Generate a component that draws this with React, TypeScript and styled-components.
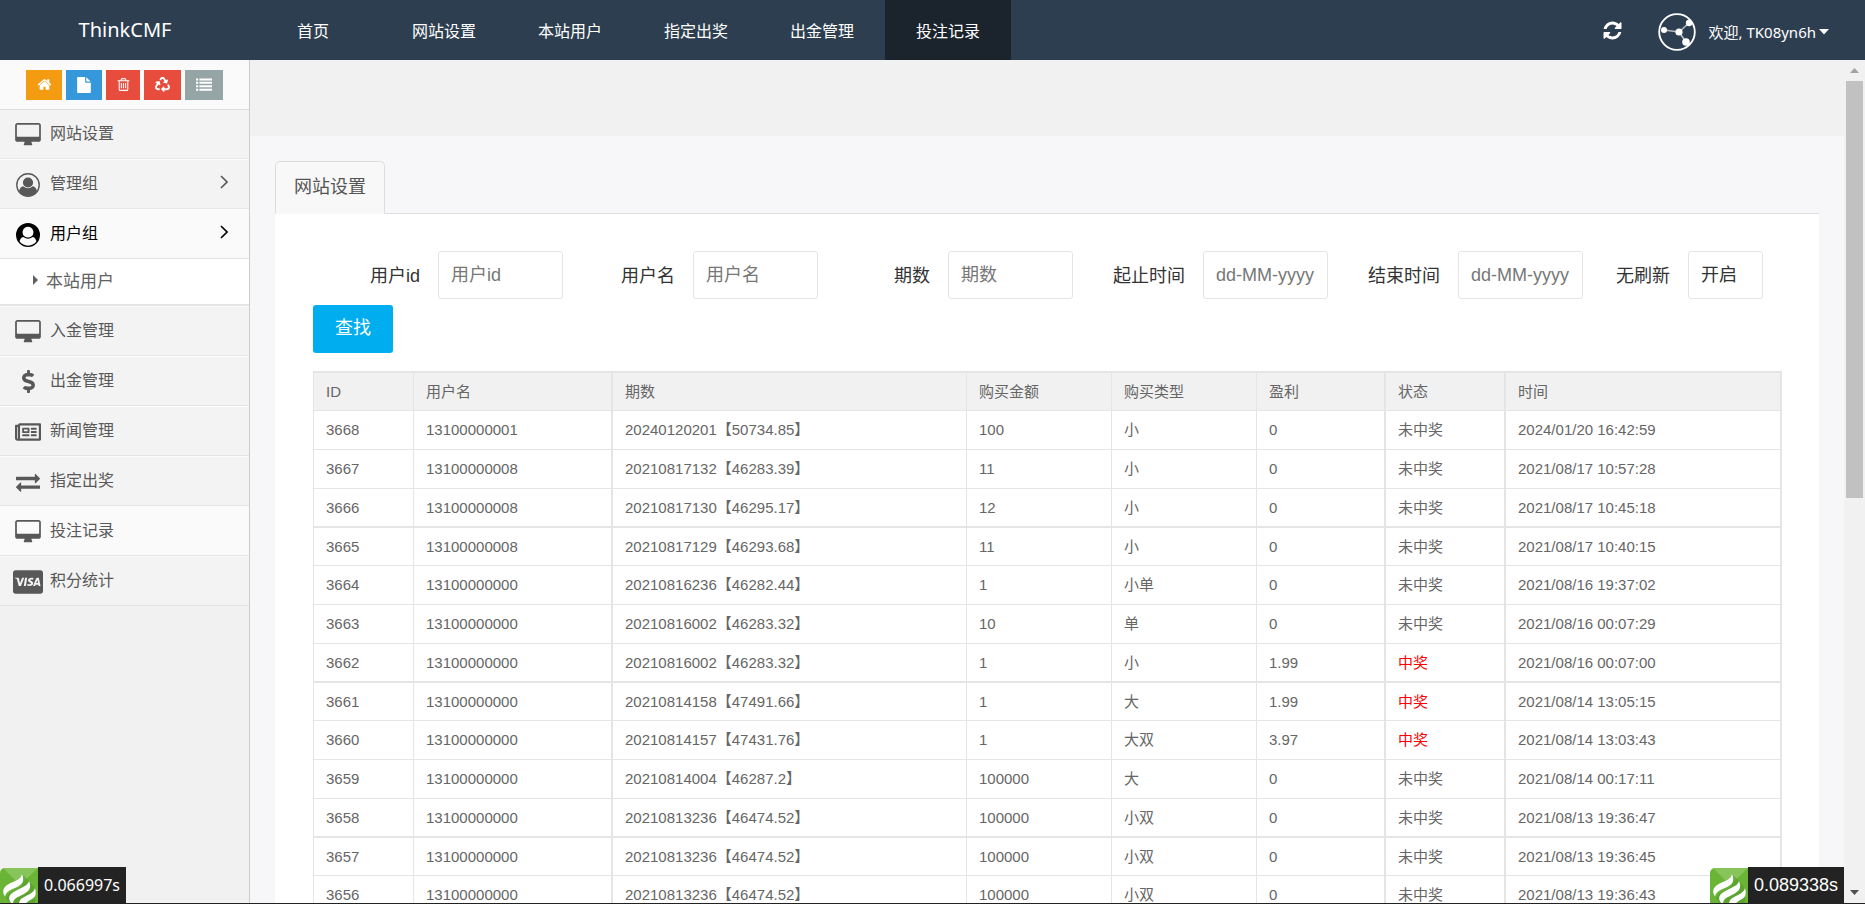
import React from "react";
import styled, { createGlobalStyle, css } from "styled-components";
import { FaCcVisa, FaDollarSign, FaRecycle, FaRegNewspaper } from "react-icons/fa";

const cjk = '"Noto Sans CJK SC", sans-serif';
const uiFont = `"Noto Sans", ${cjk}`;
const bodyFont = `"Liberation Sans", ${cjk}`;

const GlobalStyle = createGlobalStyle`
  * { box-sizing: border-box; }
  html, body, #root { height: 100%; }
  body { margin: 0; overflow: hidden; background: #f1f1f1; font-family: ${bodyFont}; color: #333; }
  a { color: inherit; text-decoration: none; }
  button, input, select { font-family: inherit; }
  svg { display: block; fill: currentColor; }
`;

const Page = styled.div`
  display: flex;
  flex-direction: column;
  height: 100vh;
  border-bottom: 1px solid #222;
  position: relative;
`;

/* ---------- top bar ---------- */

const TopBar = styled.header`
  display: flex;
  flex: none;
  align-items: stretch;
  height: 60px;
  background: #2d3e50;
  color: #fff;
  font-family: ${uiFont};
`;

const Brand = styled.a`
  width: 250px;
  flex: none;
  text-align: center;
  font-size: 20px;
  line-height: 60px;
`;

const TopNav = styled.nav`
  display: flex;
  margin-left: 16px;
`;

const TopLink = styled.a<{ $active?: boolean }>`
  padding: 0 31px;
  font-size: 16px;
  line-height: 62px;
  background: ${(p) => (p.$active ? "#1b242d" : "transparent")};
  &:first-child { margin-right: 21px; }
`;

const TopTools = styled.div`
  display: flex;
  align-items: center;
  margin-left: auto;
  padding-right: 36px;
`;

const PlainButton = styled.button`
  display: flex;
  align-items: center;
  padding: 0;
  border: 0;
  background: none;
  color: inherit;
`;

const RefreshButton = styled(PlainButton)`
  margin-right: 35px;
`;

const UserButton = styled(PlainButton)`
  gap: 3px;
  padding-top: 3px;
  font-size: 15px;
  line-height: 40px;
`;

const Avatar = styled.svg`
  margin-right: 10px;
  fill: #fff;
`;

/* ---------- sidebar ---------- */

const Body = styled.div`
  display: flex;
  flex: 1;
  min-height: 0;
`;

const Sidebar = styled.aside`
  width: 250px;
  flex: none;
  border-right: 1px solid #ccc;
  background: #f1f1f1;
  font-family: ${uiFont};
`;

const Shortcuts = styled.div`
  display: flex;
  justify-content: center;
  gap: 4px;
  height: 50px;
  padding-top: 10px;
  background: #fafafa;
  border-bottom: 1px solid #ddd;
`;

const Shortcut = styled.button<{ $color: string; $width: number }>`
  display: flex;
  align-items: center;
  justify-content: center;
  width: ${(p) => p.$width}px;
  height: 30px;
  padding: 0 0 1px;
  border: 0;
  color: #fff;
  background: ${(p) => p.$color};
`;

const Menu = styled.ul`
  margin: 0;
  padding: 0;
  list-style: none;
`;

const MenuItem = styled.li`
  border-top: 1px solid #fcfcfc;
  border-bottom: 1px solid #e5e5e5;
  &:first-child { border-top: 0; }
`;

const MenuLink = styled.a<{ $tone?: "open" | "current" }>`
  display: flex;
  align-items: center;
  height: 48px;
  padding: 0 21px 5px 12px;
  font-size: 16px;
  background: ${(p) => (p.$tone ? "#fafafa" : "#f3f3f3")};
  color: ${(p) => (p.$tone === "open" ? "#000" : "#585858")};
`;

const MenuIcon = styled.span`
  display: flex;
  justify-content: center;
  width: 32px;
  margin-right: 6px;
  padding-top: 6px;
`;

const MenuArrow = styled.svg`
  margin-left: auto;
`;

const SubMenu = styled.ul`
  margin: 0;
  padding: 0;
  list-style: none;
  border-top: 1px solid #e5e5e5;
  border-bottom: 1px solid #e5e5e5;
  background: #fff;
`;

const SubLink = styled.a`
  display: flex;
  align-items: center;
  gap: 8px;
  height: 45px;
  padding: 0 0 4px 33px;
  font-size: 17px;
  color: #616161;
`;

/* ---------- content ---------- */

const Main = styled.main`
  display: flex;
  flex-direction: column;
  flex: 1;
  min-width: 0;
  overflow: hidden;
  background: #f7f7f9;
`;

const Banner = styled.div`
  flex: none;
  height: 76px;
  background: #f1f1f1;
`;

const Content = styled.div`
  padding: 25px;
`;

const TabBar = styled.div`
  display: flex;
  border-bottom: 1px solid #ddd;
`;

const Tab = styled.a`
  margin-bottom: -1px;
  padding: 0 18px;
  border: 1px solid #ddd;
  border-bottom-color: #f8f8f8;
  border-radius: 5px 5px 0 0;
  background: #f8f8f8;
  color: #555;
  font-size: 18px;
  line-height: 51px;
`;

const Panel = styled.section`
  padding: 37px 37px 37px 38px;
  background: #fff;
`;

const SearchForm = styled.form`
  display: flex;
  flex-wrap: wrap;
  gap: 6px 5px;
  margin-bottom: 18px;
`;

const Field = styled.div`
  display: flex;
  align-items: center;
`;

const FieldLabel = styled.label<{ $short?: boolean }>`
  width: ${(p) => (p.$short ? 100 : 125)}px;
  padding: 0 18px 2px 0;
  text-align: right;
  font-size: 18px;
`;

const control = css`
  height: 48px;
  border: 1px solid #e5e5e5;
  border-radius: 3px;
  background: #fff;
  color: #333;
  font-size: 18px;
`;

const TextInput = styled.input`
  ${control}
  width: 125px;
  padding: 0 0 0 12px;
  &::placeholder { color: #777; opacity: 1; }
`;

const Select = styled.select`
  ${control}
  width: 75px;
  padding: 0 0 0 12px;
  appearance: none;
`;

const SearchButton = styled.button`
  width: 80px;
  height: 48px;
  padding: 0 0 6px;
  border: 0;
  border-radius: 3px;
  background: #00aeef;
  color: #fff;
  font-size: 18px;
`;

const Table = styled.table`
  width: 100%;
  table-layout: fixed;
  border-collapse: separate;
  border-spacing: 0;
  border: solid #e5e5e5;
  border-width: 2px 1px 0;
  font-size: 15px;
  color: #666;

  th, td {
    height: 39px;
    padding: 0 12px;
    border-right: 1px solid #e5e5e5;
    border-bottom: 1px solid #e5e5e5;
    text-align: left;
    font-weight: 400;
    line-height: 20px;
    white-space: nowrap;
  }
  th { height: 38px; background: #f1f1f1; }
  th:nth-child(2), td:nth-child(2),
  th:nth-child(6), td:nth-child(6),
  th:nth-child(7), td:nth-child(7) { border-right-width: 2px; }
  tbody tr:nth-child(4n + 3) td { border-bottom-width: 2px; }
  tbody tr:nth-child(4n) td { height: 38px; }
`;

const Column = styled.col<{ $width?: number }>`
  width: ${(p) => (p.$width ? `${p.$width}px` : "auto")};
`;

const StatusCell = styled.td<{ $won: boolean }>`
  color: ${(p) => (p.$won ? "#f00" : "inherit")};
`;

/* ---------- scroll bar ---------- */

const ScrollBar = styled.div`
  display: flex;
  flex-direction: column;
  width: 21px;
  flex: none;
  background: #f1f1f1;
`;

const ScrollArrow = styled.div<{ $down?: boolean }>`
  display: flex;
  flex: none;
  align-items: center;
  justify-content: center;
  height: 21px;
  color: ${(p) => (p.$down ? "#505050" : "#a3a3a3")};
`;

const ScrollTrack = styled.div`
  flex: 1;
  padding: 0 2px;
`;

const ScrollThumb = styled.div`
  height: 52%;
  background: #c1c1c1;
`;

/* ---------- page timing badges ---------- */

const Timing = styled.a<{ $side: "left" | "right" }>`
  position: absolute;
  bottom: 0;
  ${(p) => (p.$side === "left" ? "left: 0;" : "right: 21px;")}
  display: flex;
  height: 36px;
  overflow: hidden;
`;

const TimingText = styled.span<{ $side: "left" | "right" }>`
  padding: 0 6px;
  background: #232323;
  color: #fff;
  font-family: ${(p) => (p.$side === "left" ? uiFont : bodyFont)};
  font-size: ${(p) => (p.$side === "left" ? 16 : 18)}px;
  line-height: 36px;
`;

/* ---------- icons ---------- */

const paths = {
  home: "M1472 992v480q0 26-19 45t-45 19h-384v-384h-256v384h-384q-26 0-45-19t-19-45v-480q0-1 .5-3t.5-3l575-474 575 474q1 2 1 6zm223-69l-62 74q-8 9-21 11h-3q-13 0-21-7l-692-577-692 577q-12 8-24 7-13-2-21-11l-62-74q-8-10-7-23.5t11-21.5l719-599q32-26 76-26t76 26l244 204v-195q0-14 9-23t23-9h192q14 0 23 9t9 23v408l219 182q10 8 11 21.5t-7 23.5z",
  file: "M1152 512v-472q22 14 36 28l408 408q14 14 28 36h-472zm-128 32q0 40 28 68t68 28h544v1056q0 40-28 68t-68 28h-1344q-40 0-68-28t-28-68v-1600q0-40 28-68t68-28h800v544z",
  trash: "M704 736v576q0 14-9 23t-23 9h-64q-14 0-23-9t-9-23v-576q0-14 9-23t23-9h64q14 0 23 9t9 23zm256 0v576q0 14-9 23t-23 9h-64q-14 0-23-9t-9-23v-576q0-14 9-23t23-9h64q14 0 23 9t9 23zm256 0v576q0 14-9 23t-23 9h-64q-14 0-23-9t-9-23v-576q0-14 9-23t23-9h64q14 0 23 9t9 23zm128 724v-948h-896v948q0 22 7 40.5t14.5 27 10.5 8.5h832q3 0 10.5-8.5t14.5-27 7-40.5zm-672-1076h448l-48-117q-7-9-17-11h-317q-10 2-17 11zm928 32v64q0 14-9 23t-23 9h-96v948q0 83-47 143.5t-113 60.5h-832q-66 0-113-58.5t-47-141.5v-952h-96q-14 0-23-9t-9-23v-64q0-14 9-23t23-9h309l70-167q15-37 54-63t79-26h320q40 0 79 26t54 63l70 167h309q14 0 23 9t9 23z",
  list: "M0 160h256v224H0zM384 160h1408v224H384zM0 544h256v224H0zM384 544h1408v224H384zM0 928h256v224H0zM384 928h1408v224H384zM0 1312h256v224H0zM384 1312h1408v224H384z",
  refresh: "M1639 1056q0 5-1 7-64 268-268 434.5t-478 166.5q-146 0-282.5-55t-243.5-157l-129 129q-19 19-45 19t-45-19-19-45v-448q0-26 19-45t45-19h448q26 0 45 19t19 45-19 45l-137 137q71 66 161 102t187 36q134 0 250-65t186-179q11-17 53-117 8-23 30-23h192q13 0 22.5 9.5t9.5 22.5zm25-800v448q0 26-19 45t-45 19h-448q-26 0-45-19t-19-45 19-45l138-138q-148-137-349-137-134 0-250 65t-186 179q-11 17-53 117-8 23-30 23h-199q-13 0-22.5-9.5t-9.5-22.5v-7q65-268 270-434.5t480-166.5q146 0 284 55.5t245 156.5l130-129q19-19 45-19t45 19 19 45z",
  exchange: "M1792 1184v192q0 13-9.5 22.5t-22.5 9.5h-1376v192q0 13-9.5 22.5t-22.5 9.5q-12 0-24-10l-319-320q-9-9-9-22 0-14 9-23l320-320q9-9 23-9 13 0 22.5 9.5t9.5 22.5v192h1376q13 0 22.5 9.5t9.5 22.5zm0-544q0 14-9 23l-320 320q-9 9-23 9-13 0-22.5-9.5t-9.5-22.5v-192h-1376q-13 0-22.5-9.5t-9.5-22.5v-192q0-13 9.5-22.5t22.5-9.5h1376v-192q0-14 9-23t23-9q12 0 24 10l319 319q9 9 9 23z",
};

const Glyph = ({ name, size }: { name: keyof typeof paths; size: number }) => (
  <svg width={size} height={size} viewBox="0 0 1792 1792" aria-hidden="true">
    <path d={paths[name]} />
  </svg>
);

const DesktopIcon = () => (
  <svg width="26" height="24" viewBox="0 0 1920 1792" aria-hidden="true">
    <path d="M1792 992v-832q0-13-9.5-22.5t-22.5-9.5h-1600q-13 0-22.5 9.5t-9.5 22.5v832q0 13 9.5 22.5t22.5 9.5h1600q13 0 22.5-9.5t9.5-22.5zm128-832v1088q0 66-47 113t-113 47h-544q0 37 16 77.5t32 71 16 43.5q0 26-19 45t-45 19h-512q-26 0-45-19t-19-45q0-14 16-44t32-70 16-78h-544q-66 0-113-47t-47-113v-1088q0-66 47-113t113-47h1600q66 0 113 47t47 113z" />
  </svg>
);

const UserOutlineIcon = () => (
  <svg width="24" height="24" viewBox="0 0 24 24" aria-hidden="true">
    <circle cx="12" cy="12" r="11.200" fill="none" stroke="currentColor" strokeWidth="1.400" />
    <circle cx="12" cy="9.500" r="5.100" />
    <path d="M3 18.400C3.600 15.400 5 13.700 7.200 13.300Q12 17.400 16.800 13.300C19 13.700 20.400 15.400 21 18.400A11 11 0 0 1 3 18.400z" />
  </svg>
);

const UserSolidIcon = () => (
  <svg width="24" height="24" viewBox="0 0 24 24" aria-hidden="true">
    <path
      fillRule="evenodd"
      d="M12 0a12 12 0 1 0 0 24a12 12 0 0 0 0-24zM12 3.800a5.400 5.400 0 0 1 3.600 9.400Q12 15.800 8.400 13.200A5.400 5.400 0 0 1 12 3.800zM7.300 14Q12 17.400 16.700 14C19 14.400 20.100 16.600 20.400 18.500A10.600 10.600 0 0 1 3.600 18.500C3.900 16.600 5 14.400 7.300 14z"
    />
  </svg>
);

const FlameLogo = () => (
  <svg width="38" height="36" viewBox="0 0 38 36" aria-hidden="true">
    <path d="M0 6a5 5 0 0 1 5-5h33v35H0z" fill="#6ab536" />
    <path d="M3 1h35L20 18z" fill="#87c55b" />
    <path d="M6 31c3-6 8-7 13-10s5-6 3-14l7 7 6 7v15H10z" fill="#4e9426" opacity=".5" />
    <path d="M22 7c3 7 0 11-6 13.500S6 25 5 29.500c-5-8 2-12 8-14.500s8-4 9-8z" fill="#fff" />
    <path d="M29 14c3 7 0 10.500-6 13.500s-9 3.500-10 8.500h-2c-5-7 1-10.500 7-13.500s10-4.500 11-8.500z" fill="#fff" />
    <path d="M35 21c2 7 0 10-5 12l-4 3h-7c1-4 3-5 7-7s8-4 9-8z" fill="#fff" />
  </svg>
);

/* ---------- data ---------- */

const topLinks = ["首页", "网站设置", "本站用户", "指定出奖", "出金管理", "投注记录"];

const shortcuts = [
  { title: "首页", color: "#f39c12", width: 36, icon: <Glyph name="home" size={15} /> },
  { title: "文章", color: "#3498db", width: 36, icon: <Glyph name="file" size={16} /> },
  { title: "删除", color: "#e74c3c", width: 34, icon: <Glyph name="trash" size={15} /> },
  { title: "清除缓存", color: "#e74c3c", width: 37, icon: <FaRecycle size={15} /> },
  { title: "列表", color: "#95a5a6", width: 38, icon: <Glyph name="list" size={16} /> },
];

type MenuEntry = {
  label: string;
  icon: React.ReactNode;
  arrow?: boolean;
  tone?: "open" | "current";
  children?: string[];
};

const menu: MenuEntry[] = [
  { label: "网站设置", icon: <DesktopIcon /> },
  { label: "管理组", icon: <UserOutlineIcon />, arrow: true },
  { label: "用户组", icon: <UserSolidIcon />, arrow: true, tone: "open", children: ["本站用户"] },
  { label: "入金管理", icon: <DesktopIcon /> },
  { label: "出金管理", icon: <FaDollarSign size={23} /> },
  { label: "新闻管理", icon: <FaRegNewspaper size={26} /> },
  { label: "指定出奖", icon: <Glyph name="exchange" size={24} /> },
  { label: "投注记录", icon: <DesktopIcon />, tone: "current" },
  { label: "积分统计", icon: <FaCcVisa size={30} /> },
];

const fields = [
  { id: "uid", label: "用户id", placeholder: "用户id" },
  { id: "uname", label: "用户名", placeholder: "用户名" },
  { id: "issue", label: "期数", placeholder: "期数" },
  { id: "start", label: "起止时间", placeholder: "dd-MM-yyyy" },
  { id: "end", label: "结束时间", placeholder: "dd-MM-yyyy" },
];

const headers = ["ID", "用户名", "期数", "购买金额", "购买类型", "盈利", "状态", "时间"];
const widths = [100, 199, undefined, 145, 145, 129, 120, 275];

const rows: string[][] = [
  ["3668", "13100000001", "20240120201【50734.85】", "100", "小", "0", "未中奖", "2024/01/20 16:42:59"],
  ["3667", "13100000008", "20210817132【46283.39】", "11", "小", "0", "未中奖", "2021/08/17 10:57:28"],
  ["3666", "13100000008", "20210817130【46295.17】", "12", "小", "0", "未中奖", "2021/08/17 10:45:18"],
  ["3665", "13100000008", "20210817129【46293.68】", "11", "小", "0", "未中奖", "2021/08/17 10:40:15"],
  ["3664", "13100000000", "20210816236【46282.44】", "1", "小单", "0", "未中奖", "2021/08/16 19:37:02"],
  ["3663", "13100000000", "20210816002【46283.32】", "10", "单", "0", "未中奖", "2021/08/16 00:07:29"],
  ["3662", "13100000000", "20210816002【46283.32】", "1", "小", "1.99", "中奖", "2021/08/16 00:07:00"],
  ["3661", "13100000000", "20210814158【47491.66】", "1", "大", "1.99", "中奖", "2021/08/14 13:05:15"],
  ["3660", "13100000000", "20210814157【47431.76】", "1", "大双", "3.97", "中奖", "2021/08/14 13:03:43"],
  ["3659", "13100000000", "20210814004【46287.2】", "100000", "大", "0", "未中奖", "2021/08/14 00:17:11"],
  ["3658", "13100000000", "20210813236【46474.52】", "100000", "小双", "0", "未中奖", "2021/08/13 19:36:47"],
  ["3657", "13100000000", "20210813236【46474.52】", "100000", "小双", "0", "未中奖", "2021/08/13 19:36:45"],
  ["3656", "13100000000", "20210813236【46474.52】", "100000", "小双", "0", "未中奖", "2021/08/13 19:36:43"],
];

const Header = () => (
  <TopBar>
    <Brand href="#">ThinkCMF</Brand>
    <TopNav>
      {topLinks.map((t, i) => (
        <TopLink key={t} href="#" $active={i === topLinks.length - 1}>{t}</TopLink>
      ))}
    </TopNav>
    <TopTools>
      <RefreshButton type="button" aria-label="刷新"><Glyph name="refresh" size={21} /></RefreshButton>
      <UserButton type="button">
        <Avatar width="38" height="38" viewBox="0 0 38 38" aria-hidden="true">
          <circle cx="19" cy="19" r="17.800" fill="none" stroke="#fff" strokeWidth="1.800" />
          <path d="M6 17L21 19L31 10M21 19L28 29" fill="none" stroke="#b5bdc5" strokeWidth="1.600" />
          <circle cx="6" cy="17" r="3" />
          <circle cx="21" cy="19" r="3.600" />
          <circle cx="31" cy="10" r="3.200" />
          <circle cx="28" cy="29" r="3.800" />
        </Avatar>
        <span>欢迎, TK08yn6h</span>
        <svg width="10" height="6" viewBox="0 0 10 6" aria-hidden="true"><path d="M0 0h10L5 5.500z" /></svg>
      </UserButton>
    </TopTools>
  </TopBar>
);

const SideMenu = () => (
  <Sidebar>
    <Shortcuts>
      {shortcuts.map((s) => (
        <Shortcut key={s.title} type="button" aria-label={s.title} $color={s.color} $width={s.width}>
          {s.icon}
        </Shortcut>
      ))}
    </Shortcuts>
    <Menu>
      {menu.map((m) => (
        <MenuItem key={m.label}>
          <MenuLink href="#" $tone={m.tone}>
            <MenuIcon>{m.icon}</MenuIcon>
            {m.label}
            {m.arrow && (
              <MenuArrow width="8" height="14" viewBox="0 0 8 14" aria-hidden="true">
                <path d="M1 1l6 6-6 6" fill="none" stroke="currentColor" strokeWidth="1.600" />
              </MenuArrow>
            )}
          </MenuLink>
          {m.children && (
            <SubMenu>
              {m.children.map((c) => (
                <li key={c}>
                  <SubLink href="#">
                    <svg width="5" height="10" viewBox="0 0 5 10" aria-hidden="true"><path d="M0 0l5 5-5 5z" /></svg>
                    {c}
                  </SubLink>
                </li>
              ))}
            </SubMenu>
          )}
        </MenuItem>
      ))}
    </Menu>
  </Sidebar>
);

const BetTable = () => (
  <Table>
    <colgroup>
      {widths.map((w, i) => <Column key={i} $width={w} />)}
    </colgroup>
    <thead>
      <tr>{headers.map((h) => <th key={h} scope="col">{h}</th>)}</tr>
    </thead>
    <tbody>
      {rows.map((r) => (
        <tr key={r[0]}>
          {r.map((c, i) =>
            i === 6 ? <StatusCell key={i} $won={c === "中奖"}>{c}</StatusCell> : <td key={i}>{c}</td>
          )}
        </tr>
      ))}
    </tbody>
  </Table>
);

export default function App() {
  return (
    <>
      <GlobalStyle />
      <Page>
        <Header />
        <Body>
          <SideMenu />
          <Main>
            <Banner />
            <Content>
              <TabBar><Tab href="#">网站设置</Tab></TabBar>
              <Panel>
                <SearchForm>
                  {fields.map((f) => (
                    <Field key={f.id}>
                      <FieldLabel htmlFor={f.id}>{f.label}</FieldLabel>
                      <TextInput id={f.id} type="text" placeholder={f.placeholder} />
                    </Field>
                  ))}
                  <Field>
                    <FieldLabel htmlFor="live" $short>无刷新</FieldLabel>
                    <Select id="live"><option>开启</option></Select>
                  </Field>
                  <SearchButton type="button">查找</SearchButton>
                </SearchForm>
                <BetTable />
              </Panel>
            </Content>
          </Main>
          <ScrollBar aria-hidden="true">
            <ScrollArrow>
              <svg width="9" height="5" viewBox="0 0 9 5"><path d="M0 5L4.500 0L9 5z" /></svg>
            </ScrollArrow>
            <ScrollTrack><ScrollThumb /></ScrollTrack>
            <ScrollArrow $down>
              <svg width="9" height="5" viewBox="0 0 9 5"><path d="M0 0L4.500 5L9 0z" /></svg>
            </ScrollArrow>
          </ScrollBar>
        </Body>
        <Timing href="#" $side="left">
          <FlameLogo />
          <TimingText $side="left">0.066997s</TimingText>
        </Timing>
        <Timing href="#" $side="right">
          <FlameLogo />
          <TimingText $side="right">0.089338s</TimingText>
        </Timing>
      </Page>
    </>
  );
}
